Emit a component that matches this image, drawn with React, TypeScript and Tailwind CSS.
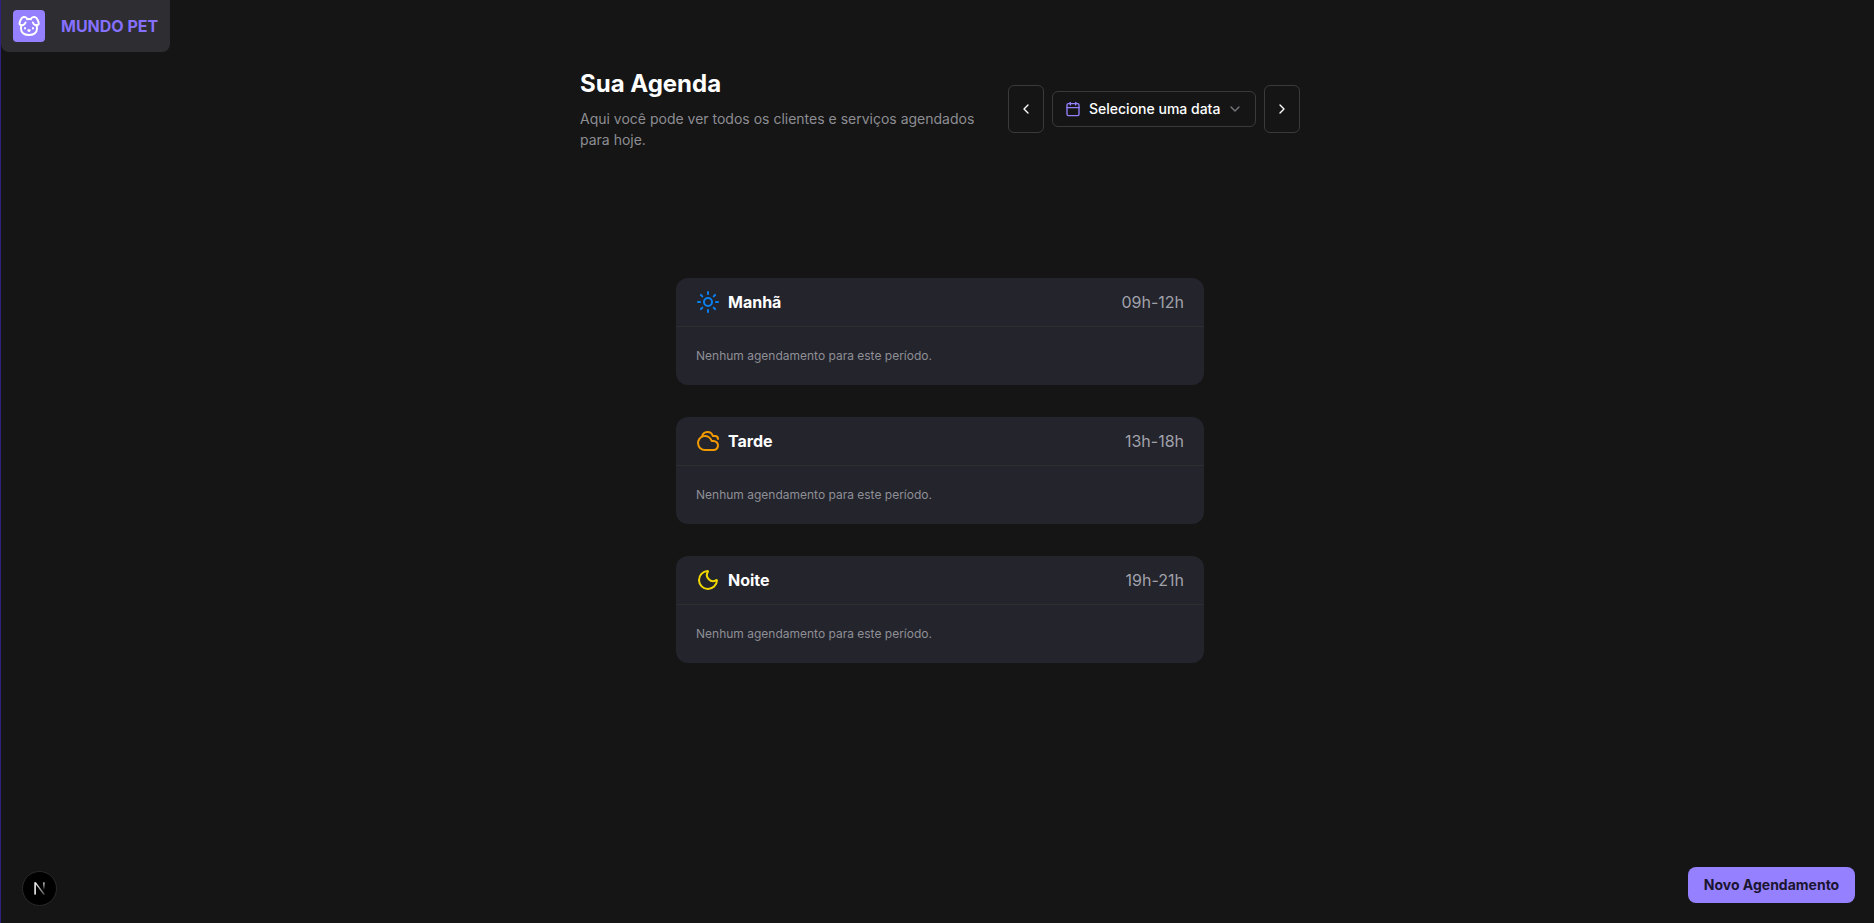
import { Calendar, ChevronDown, ChevronLeft, ChevronRight, Cloudy, Moon, Sun } from "lucide-react";
import type { ReactNode } from "react";

function DogLogo() {
  return (
    <svg viewBox="0 0 24 24" fill="none" stroke="currentColor" strokeWidth="2" strokeLinecap="round" strokeLinejoin="round" className="w-6 h-6 text-white">
      <path d="M11.25 16.25h1.5L12 17z" />
      <path d="M16 14v.5" />
      <path d="M4.42 11.247A13.152 13.152 0 0 0 4 14.556C4 18.728 7.582 21 12 21s8-2.272 8-6.444a11.702 11.702 0 0 0-.493-3.309" />
      <path d="M8 14v.5" />
      <path d="M8.5 8.5c-.384 1.05-1.083 2.028-2.344 2.5-1.931.722-3.576-.297-3.656-1-.113-.994 1.177-6.53 4-7 1.923-.321 3.651.845 3.651 2.235A7.497 7.497 0 0 1 14 5.277c0-1.39 1.844-2.598 3.767-2.277 2.823.47 4.113 6.006 4 7-.08.703-1.725 1.722-3.656 1-1.261-.472-1.855-1.45-2.239-2.5" />
    </svg>
  );
}

function Period({ icon, title, hours }: { icon: ReactNode; title: string; hours: string }) {
  return (
    <section className="w-[528px] h-[107px] rounded-xl bg-[#23242c] overflow-hidden">
      <div className="h-[49px] pb-px px-5 flex items-center justify-between border-b border-[#2d2d30]">
        <div className="flex items-center gap-2">
          {icon}
          <h2 className="text-base font-bold text-white">{title}</h2>
        </div>
        <span className="text-base text-[#a1a1aa]">{hours}</span>
      </div>
      <p className="px-5 pt-[21px] text-xs leading-4 text-[#8f8f96]">Nenhum agendamento para este período.</p>
    </section>
  );
}

export default function App() {
  return (
    <div className="relative h-[923px] overflow-hidden bg-[#151515] font-['Inter',sans-serif] border-l border-[#30237f] pl-[5px]">
      {/* Logo */}
      <header className="absolute top-0 left-0 w-[169px] h-[52px] pl-3 flex items-center gap-4 rounded-b-lg bg-[#2e2d32]">
        <div className="w-8 h-8 rounded flex items-center justify-center bg-[#9580ff]">
          <DogLogo />
        </div>
        <span className="text-base font-bold text-[#8570ff]">MUNDO PET</span>
      </header>

      <main className="w-[720px] mx-auto pt-[68px]">
        <div className="flex items-center justify-between">
          <div className="w-[400px]">
            <h1 className="text-2xl font-bold text-white leading-8">Sua Agenda</h1>
            <p className="mt-2 text-sm leading-[21px] text-[#8d8d93]">
              Aqui você pode ver todos os clientes e serviços agendados para hoje.
            </p>
          </div>
          <div className="flex items-center gap-2">
            <button className="w-9 h-12 rounded-md border border-[#3a3a3d] flex items-center justify-center text-white">
              <ChevronLeft className="w-4 h-4" />
            </button>
            <button className="w-[204px] h-9 px-3 rounded-md border border-[#3a3a3d] flex items-center justify-between">
              <span className="flex items-center gap-2 text-sm font-medium text-white">
                <Calendar className="w-4 h-4 text-[#9580ff]" />
                Selecione uma data
              </span>
              <ChevronDown className="w-4 h-4 text-[#77777c]" />
            </button>
            <button className="w-9 h-12 rounded-md border border-[#3a3a3d] flex items-center justify-center text-white">
              <ChevronRight className="w-4 h-4" />
            </button>
          </div>
        </div>

        <div className="mt-[128px] flex flex-col items-center gap-8">
          <Period icon={<Sun className="w-6 h-6 text-[#0a80f0]" />} title="Manhã" hours="09h-12h" />
          <Period icon={<Cloudy className="w-6 h-6 text-[#f09a00]" />} title="Tarde" hours="13h-18h" />
          <Period icon={<Moon className="w-6 h-6 text-[#f0d800]" />} title="Noite" hours="19h-21h" />
        </div>
      </main>

      {/* Next dev badge */}
      <div className="absolute left-[21px] bottom-[17px] w-[35px] h-[35px] rounded-full bg-black border border-[#2a2a2a] flex items-center justify-center">
        <svg viewBox="0 0 16 16" className="w-[15px] h-[15px]" fill="none">
          <defs>
            <linearGradient id="nextFade" x1="0" y1="0" x2="1" y2="1">
              <stop offset="0%" stopColor="#fff" />
              <stop offset="100%" stopColor="#fff" stopOpacity="0.3" />
            </linearGradient>
            <linearGradient id="nextStem" x1="0" y1="0" x2="0" y2="1">
              <stop offset="0%" stopColor="#fff" />
              <stop offset="100%" stopColor="#fff" stopOpacity="0" />
            </linearGradient>
          </defs>
          <rect x="2.5" y="1.5" width="1.6" height="13" fill="#fff" />
          <polygon points="2.6,1.5 4.4,1.5 14,14.5 12,14.5" fill="url(#nextFade)" />
          <rect x="12" y="1.5" width="1.4" height="8" fill="url(#nextStem)" />
        </svg>
      </div>

      <button className="absolute right-[19px] bottom-[20px] w-[167px] h-9 rounded-lg bg-[#9580ff] text-sm font-bold text-[#1b1530]">
        Novo Agendamento
      </button>
    </div>
  );
}
